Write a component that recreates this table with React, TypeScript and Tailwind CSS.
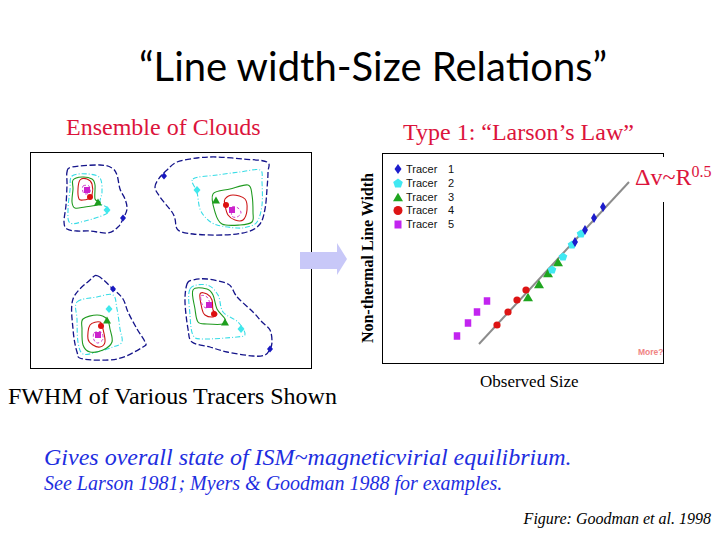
import React from "react";

type P = [number, number];

function smooth(pts: P[]): string {
  const n = pts.length;
  const g = (i: number) => pts[(i + n) % n];
  let d = `M${pts[0][0]},${pts[0][1]}`;
  for (let i = 0; i < n; i++) {
    const p0 = g(i - 1);
    const p1 = g(i);
    const p2 = g(i + 1);
    const p3 = g(i + 2);
    const c1x = p1[0] + (p2[0] - p0[0]) / 6;
    const c1y = p1[1] + (p2[1] - p0[1]) / 6;
    const c2x = p2[0] - (p3[0] - p1[0]) / 6;
    const c2y = p2[1] - (p3[1] - p1[1]) / 6;
    d += ` C${c1x.toFixed(1)},${c1y.toFixed(1)} ${c2x.toFixed(1)},${c2y.toFixed(1)} ${p2[0]},${p2[1]}`;
  }
  return d + " Z";
}

const NAVY = "#14148a";
const CYAN = "#38dce6";
const GREEN = "#1f9a1f";
const RED = "#cc1414";
const PINK = "#d040d0";

type Cloud = {
  navy: P[];
  cyan: P[];
  green: P[];
  red: P[];
  pink: P[];
  m: { b: P; c: P; g: P; r: P; s: P };
};

const clouds: Cloud[] = [
  {
    navy: [[67,172],[72,167],[100,165],[112,168],[117,175],[120,189],[125,199],[127,209],[123,219],[118,227],[108,233],[90,231],[77,231],[67,229],[64,222],[66,205],[67,185]],
    cyan: [[72,176],[88,174],[100,178],[102,192],[100,203],[108,208],[106,214],[85,221],[70,223],[68,210],[70,190]],
    green: [[73,180],[82,177],[92,179],[95,185],[95,199],[100,202],[97,205],[85,207],[75,208],[72,202],[73,189]],
    red: [[80,180],[87,179],[92,184],[92,195],[88,199],[83,200],[79,199],[78,189]],
    pink: [[83,186],[89,186],[90,192],[86,194],[83,192]],
    m: { b: [123,218], c: [107,210], g: [98,202], r: [90,197], s: [87,190] },
  },
  {
    navy: [[155,187],[160,177],[167,170],[177,162],[197,158],[217,157],[243,159],[267,162],[268,172],[267,189],[265,209],[260,224],[247,232],[223,235],[193,234],[178,230],[175,219],[172,212],[160,197]],
    cyan: [[193,179],[217,175],[240,172],[260,170],[262,182],[262,205],[257,222],[247,227],[237,228],[217,225],[207,219],[200,209],[197,192]],
    green: [[213,194],[230,189],[248,185],[252,195],[253,212],[252,222],[240,225],[222,224],[215,212]],
    red: [[225,199],[233,195],[245,199],[247,210],[243,220],[235,220],[228,215],[225,205]],
    pink: [[232,207],[238,208],[241,213],[237,217],[232,216]],
    m: { b: [164,176], c: [197,190], g: [216,200], r: [226,205], s: [232,210] },
  },
  {
    navy: [[98,276],[90,280],[73,299],[73,329],[77,352],[83,359],[117,359],[143,347],[145,342],[137,329],[128,312],[123,299],[113,289]],
    cyan: [[77,302],[97,297],[113,295],[117,309],[120,329],[122,342],[113,347],[97,352],[83,354],[78,342],[77,319]],
    green: [[83,319],[97,315],[107,319],[110,329],[112,342],[103,350],[90,352],[83,345],[82,329]],
    red: [[90,325],[100,322],[103,329],[105,342],[100,347],[93,345],[88,339]],
    pink: [[94,333],[101,332],[103,339],[98,343],[94,340]],
    m: { b: [113,289], c: [109,309], g: [107,320], r: [101,326], s: [98,335] },
  },
  {
    navy: [[187,284],[193,280],[207,279],[228,284],[235,294],[240,300],[253,312],[262,322],[270,330],[272,342],[270,349],[265,355],[253,356],[227,352],[210,347],[192,342],[188,329],[185,302]],
    cyan: [[190,289],[207,285],[218,295],[223,312],[238,322],[245,334],[237,337],[203,339],[193,335],[190,315]],
    green: [[193,290],[207,289],[213,295],[217,309],[225,319],[223,324],[207,324],[198,322],[195,309]],
    red: [[200,294],[207,294],[212,300],[213,310],[217,314],[213,317],[205,315],[202,309]],
    pink: [[201,296],[207,297],[210,305],[206,308],[202,304]],
    m: { b: [270,349], c: [241,329], g: [225,322], r: [214,314], s: [209,305] },
  },
];

function Diamond({ p, hw, hh, fill }: { p: P; hw: number; hh: number; fill: string }) {
  const [x, y] = p;
  return <polygon points={`${x},${y - hh} ${x + hw},${y} ${x},${y + hh} ${x - hw},${y}`} fill={fill} />;
}

function Tri({ p, s, fill }: { p: P; s: number; fill: string }) {
  const [x, y] = p;
  const h = s * 0.85;
  return <polygon points={`${x},${y - h / 2} ${x + s / 2},${y + h / 2} ${x - s / 2},${y + h / 2}`} fill={fill} />;
}

function Pent({ p, r, fill }: { p: P; r: number; fill: string }) {
  const [x, y] = p;
  const pts: string[] = [];
  for (let i = 0; i < 5; i++) {
    const a = -Math.PI / 2 + (i * 2 * Math.PI) / 5;
    pts.push(`${(x + r * Math.cos(a)).toFixed(1)},${(y + r * Math.sin(a)).toFixed(1)}`);
  }
  return <polygon points={pts.join(" ")} fill={fill} />;
}

function Sq({ p, w, h, fill }: { p: P; w: number; h: number; fill: string }) {
  return <rect x={p[0] - w / 2} y={p[1] - h / 2} width={w} height={h} fill={fill} />;
}

function CloudsSvg() {
  return (
    <svg width="280" height="215" viewBox="31 153 280 215" className="block">
      {clouds.map((c, i) => (
        <g key={i} fill="none" strokeLinejoin="round">
          <path d={smooth(c.navy)} stroke={NAVY} strokeWidth={1.3} strokeDasharray="6 2.5" />
          <path d={smooth(c.cyan)} stroke={CYAN} strokeWidth={1.1} strokeDasharray="5 2 1 2" />
          <path d={smooth(c.green)} stroke={GREEN} strokeWidth={1.1} />
          <path d={smooth(c.red)} stroke={RED} strokeWidth={1.1} />
          <path d={smooth(c.pink)} stroke={PINK} strokeWidth={1} strokeDasharray="3 2" />
        </g>
      ))}
      {clouds.map((c, i) => (
        <g key={"m" + i}>
          <Diamond p={c.m.b} hw={3} hh={3.5} fill="#1818c0" />
          <Diamond p={c.m.c} hw={3.5} hh={4} fill="#40e8ec" />
          <Tri p={c.m.g} s={8} fill="#1e9e1e" />
          <circle cx={c.m.r[0]} cy={c.m.r[1]} r={3} fill="#dd1010" />
          <Sq p={c.m.s} w={6} h={6} fill="#cc22cc" />
        </g>
      ))}
    </svg>
  );
}

const CB = "#1c1ccc";
const CC = "#40e8f2";
const CG = "#1fa51f";
const CR = "#dd1414";
const CM = "#c224f0";

const blues: P[] = [[603,207],[594,218],[585,230],[575,242]];
const cyans: P[] = [[581,234],[572,245],[563,257],[552,270]];
const greens: P[] = [[558,262],[548,273],[539,284],[528,297]];
const reds: P[] = [[526,290],[517,300],[508,312],[497,325]];
const mags: P[] = [[487,301],[477,312],[468,323],[457,336]];

const legend: { y: number; n: string }[] = [
  { y: 169, n: "1" },
  { y: 183, n: "2" },
  { y: 197, n: "3" },
  { y: 210, n: "4" },
  { y: 224, n: "5" },
];

function ChartSvg() {
  return (
    <svg width="280" height="209" viewBox="383 154 280 209" className="block">
      <Diamond p={[398, 169]} hw={3.5} hh={5} fill={CB} />
      <Pent p={[398, 183.5]} r={5} fill={CC} />
      <Tri p={[398, 197]} s={10} fill={CG} />
      <circle cx={398} cy={210.5} r={4.5} fill={CR} />
      <Sq p={[398, 224.5]} w={7} h={8} fill={CM} />
      {legend.map((l) => (
        <g key={l.n} fontFamily='"Liberation Sans", Arial, sans-serif' fontSize="11" fill="#111">
          <text x={406} y={l.y + 4}>Tracer</text>
          <text x={448} y={l.y + 4}>{l.n}</text>
        </g>
      ))}
      <line x1={479} y1={344} x2={629} y2={182} stroke="#8c8c8c" strokeWidth={2} />
      {mags.map((p, i) => <Sq key={"s" + i} p={p} w={6.5} h={7.5} fill={CM} />)}
      {reds.map((p, i) => <circle key={"r" + i} cx={p[0]} cy={p[1]} r={3.6} fill={CR} />)}
      {greens.map((p, i) => <Tri key={"g" + i} p={p} s={10} fill={CG} />)}
      {cyans.map((p, i) => <Pent key={"c" + i} p={p} r={4.5} fill={CC} />)}
      {blues.map((p, i) => <Diamond key={"b" + i} p={p} hw={3} hh={5} fill={CB} />)}
      <text x={638} y={355} fontFamily='"Liberation Sans", Arial, sans-serif' fontSize="8.5" fontWeight="bold" fill="#f08484">More?</text>
    </svg>
  );
}

export default function App() {
  return (
    <div className="relative w-[719px] h-[539px] overflow-hidden bg-white text-black">
      <div className="h-[111px] pt-[42px] pl-[27px] text-center">
        <h1 className="text-[40px] leading-[48px] font-normal whitespace-nowrap font-['Comic_Sans_MS','Lato',sans-serif]">
          “Line width-Size Relations”
        </h1>
      </div>

      <div className="flex h-[299px] font-['Liberation_Serif','Times_New_Roman',serif]">
        <div className="w-[346px] shrink-0">
          <div className="mt-[2px] pl-[66px] text-[24px] leading-[28px] text-[#dc143c] whitespace-nowrap">
            Ensemble of Clouds
          </div>
          <div className="ml-[30px] mt-[11px] w-[282px] h-[217px] border border-black">
            <CloudsSvg />
          </div>
          <div className="mt-[13px] pl-[8px] text-[24px] leading-[28px] whitespace-nowrap">
            FWHM of Various Tracers Shown
          </div>
        </div>

        <div className="flex-1">
          <div className="mt-[7px] pl-[57px] text-[24px] leading-[28px] text-[#dc143c] whitespace-nowrap">
            Type 1: “Larson’s Law”
          </div>
          <div className="mt-[7px] flex">
            <div className="w-[36px] pl-[8px] flex items-center justify-center">
              <span className="[writing-mode:vertical-rl] rotate-180 text-[16px] leading-[18px] font-bold whitespace-nowrap">
                Non-thermal Line Width
              </span>
            </div>
            <div className="w-[282px] h-[211px] border border-black">
              <ChartSvg />
            </div>
          </div>
          <div className="mt-[8px] pl-[134px] text-[17px] leading-[20px] whitespace-nowrap">
            Observed Size
          </div>
        </div>
      </div>

      <div className="mt-[34px] pl-[44px] font-['Liberation_Serif','Times_New_Roman',serif] italic text-[#1e2ee0]">
        <div className="text-[24px] leading-[27px] whitespace-nowrap">
          Gives overall state of ISM~magneticvirial equilibrium.
        </div>
        <div className="text-[20px] leading-[24px] whitespace-nowrap">
          See Larson 1981; Myers &amp; Goodman 1988 for examples.
        </div>
      </div>
      <div className="mt-[14px] pr-[8px] text-right font-['Liberation_Serif','Times_New_Roman',serif] italic text-[16px] leading-[20px] whitespace-nowrap">
        Figure: Goodman et al. 1998
      </div>

      {/* arrow overlay */}
      <svg className="absolute left-[300px] top-[243px]" width="47" height="32" viewBox="0 0 47 32">
        <polygon points="0,9 37,9 37,0 47,16 37,32 37,26 0,26" fill="#c8c8f8" />
      </svg>

      {/* Δv label overlay */}
      <div className="absolute left-[632px] top-[157px] w-[84px] h-[45px] bg-white pt-[7px] pl-[3px] font-['Liberation_Serif','Times_New_Roman',serif] text-[#dc143c] whitespace-nowrap">
        <span className="text-[24px] leading-[24px]">Δv~R</span>
        <span className="text-[16px] leading-[16px] align-[8px]">0.5</span>
      </div>
    </div>
  );
}
